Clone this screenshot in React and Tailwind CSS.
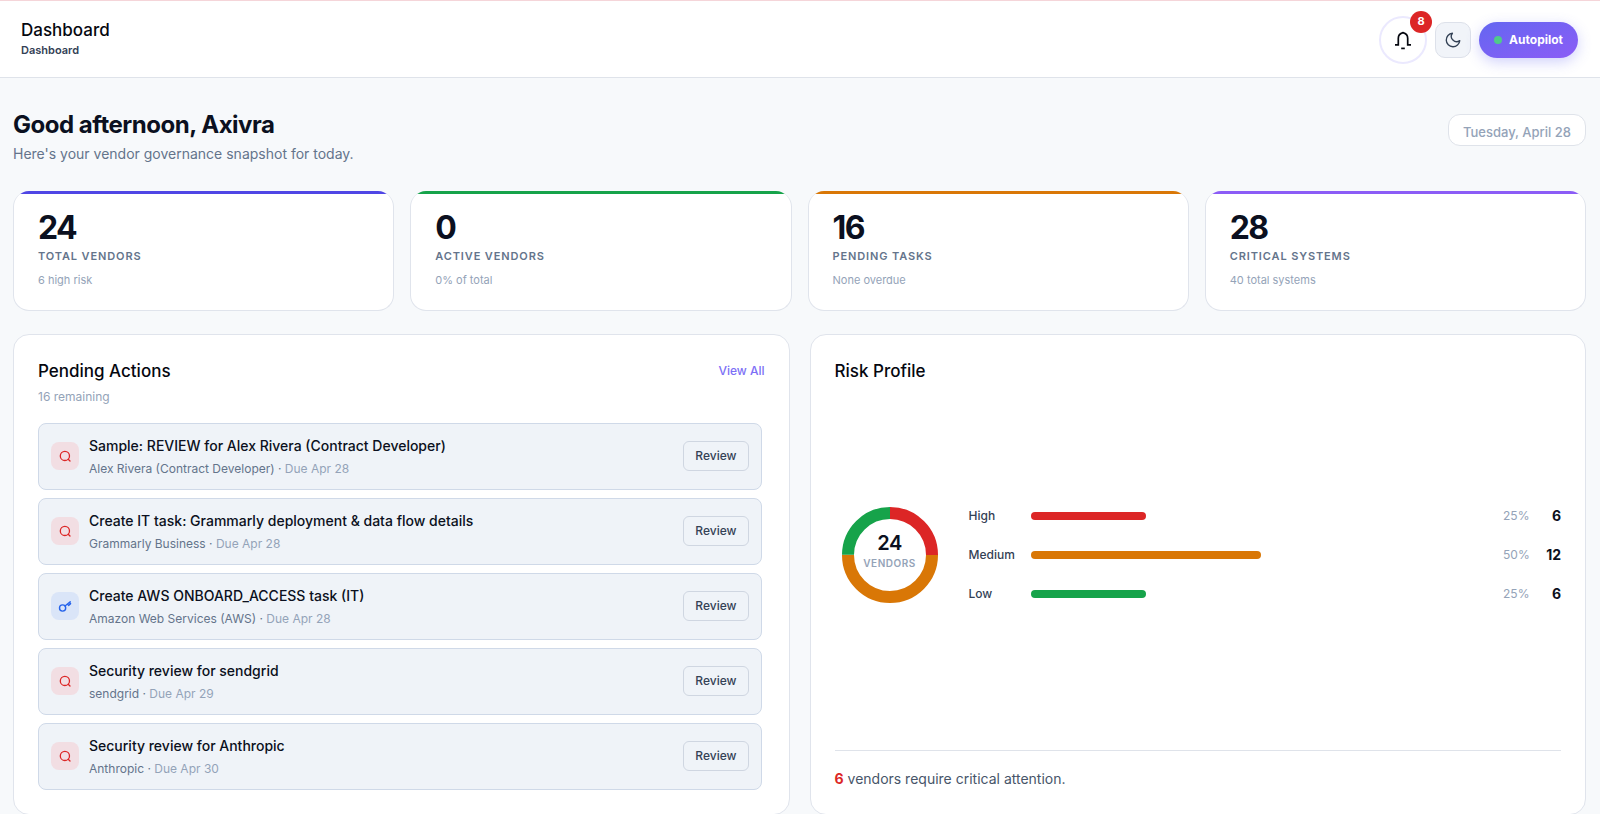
import React from 'react';

const stats = [
    { value: 24, label: 'Total Vendors', note: '6 high risk', bar: 'bg-[#4f46e5]' },
    { value: 0, label: 'Active Vendors', note: '0% of total', bar: 'bg-[#16a34a]' },
    { value: 16, label: 'Pending Tasks', note: 'None overdue', bar: 'bg-[#d97706]' },
    { value: 28, label: 'Critical Systems', note: '40 total systems', bar: 'bg-[#8b5cf6]' },
];

const actions = [
    { title: 'Sample: REVIEW for Alex Rivera (Contract Developer)', vendor: 'Alex Rivera (Contract Developer)', due: 'Due Apr 28', type: 'review' },
    { title: 'Create IT task: Grammarly deployment & data flow details', vendor: 'Grammarly Business', due: 'Due Apr 28', type: 'review' },
    { title: 'Create AWS ONBOARD_ACCESS task (IT)', vendor: 'Amazon Web Services (AWS)', due: 'Due Apr 28', type: 'access' },
    { title: 'Security review for sendgrid', vendor: 'sendgrid', due: 'Due Apr 29', type: 'review' },
    { title: 'Security review for Anthropic', vendor: 'Anthropic', due: 'Due Apr 30', type: 'review' },
];

const risks = [
    { label: 'High', percent: 25, count: 6, bar: 'bg-[#dc2626]', color: '#dc2626' },
    { label: 'Medium', percent: 50, count: 12, bar: 'bg-[#d97706]', color: '#d97706' },
    { label: 'Low', percent: 25, count: 6, bar: 'bg-[#16a34a]', color: '#16a34a' },
];

function BellIcon() {
    return (
        <svg className="w-5 h-5" viewBox="0 0 20 20" fill="none" stroke="currentColor" strokeWidth="1.7">
            <path d="M2 14.8h3.3V8.2c0-2.8 1.8-4.8 4.7-5.6 2.9.8 4.7 2.8 4.7 5.6v6.6H18" />
            <path d="M8.2 18.4h3.6" />
        </svg>
    );
}

function MoonIcon() {
    return (
        <svg className="w-[18px] h-[18px]" viewBox="0 0 24 24" fill="none" stroke="currentColor" strokeWidth="1.8" strokeLinecap="round" strokeLinejoin="round">
            <path d="M21 12.79A9 9 0 1 1 11.21 3 7 7 0 0 0 21 12.79z" />
        </svg>
    );
}

function ReviewIcon() {
    return (
        <svg className="w-3.5 h-3.5" viewBox="0 0 14 14" fill="none" stroke="currentColor" strokeWidth="1.3" strokeLinecap="round">
            <circle cx="6.9" cy="6.9" r="4.6" />
            <path d="M10.2 10.2l1.8 1.8" />
        </svg>
    );
}

function KeyIcon() {
    return (
        <svg className="w-3.5 h-3.5" viewBox="0 0 14 14" fill="none" stroke="currentColor" strokeWidth="1.4" strokeLinecap="round" strokeLinejoin="round">
            <circle cx="4.6" cy="9" r="3.1" />
            <path d="M7 7l5.2-4.2M9.4 5.1l1.2 1.3 2-1.7-1.1-1.4" />
        </svg>
    );
}

function Header() {
    return (
        <header className="flex items-center justify-between h-[78px] pl-[21px] pr-[22px] bg-white border-t border-t-[#f5d5d9] border-b border-b-[#dfe3ea]">
            <div className="flex flex-col pb-[3px]">
                <h1 className="text-[17px] leading-6 font-medium text-[#05070f]">Dashboard</h1>
                <span className="text-[11px] leading-4 font-semibold text-[#334155]">Dashboard</span>
            </div>
            <div className="flex items-center gap-2 pt-px">
                <button aria-label="Notifications" className="relative flex items-center justify-center w-12 h-12 rounded-full bg-white border-2 border-[#ebe9fe] text-[#05070f]">
                    <BellIcon />
                    <span className="absolute -top-[7px] -right-[7px] flex items-center justify-center w-[22px] h-[22px] rounded-full bg-[#dc2626] text-[11px] font-bold text-white">8</span>
                </button>
                <button aria-label="Dark mode" className="flex items-center justify-center w-9 h-9 rounded-[10px] bg-[#f1f4f9] border border-[#dde1ea] text-[#334155]">
                    <MoonIcon />
                </button>
                <button className="flex items-center gap-[7px] h-9 px-[15px] rounded-full bg-linear-to-br from-[#6366f1] to-[#8b5cf6] text-[12px] font-bold text-white shadow-[0_4px_14px_rgba(99,102,241,0.3)]">
                    <span className="w-2 h-2 rounded-full bg-[#4fca8a]" />
                    Autopilot
                </button>
            </div>
        </header>
    );
}

function StatCard({ value, label, note, bar }) {
    return (
        <div className="h-[120px] rounded-2xl bg-white border border-t-0 border-[#e0e4ec] overflow-hidden">
            <div className={`h-[3px] ${bar}`} />
            <div className="flex flex-col px-6 pt-4">
                <span className="text-[32px] leading-9 font-bold tracking-tighter text-[#0b1020]">{value}</span>
                <span className="mt-0.5 text-[11px] leading-4 font-semibold tracking-[0.08em] uppercase text-[#64748b]">{label}</span>
                <span className="mt-2 text-[11px] leading-4 text-[#94a3b8]">{note}</span>
            </div>
        </div>
    );
}

function ActionRow({ title, vendor, due, type }) {
    const isReview = type === 'review';
    return (
        <li className="flex items-center gap-2.5 h-[67px] px-3 pb-px rounded-lg bg-[#eff3f8] border border-[#cfd9e8]">
            <span className={`flex items-center justify-center w-7 h-7 rounded-lg ${isReview ? 'bg-[#f2dee3] text-[#dc2626]' : 'bg-[#dae5f8] text-[#2563eb]'}`}>
                {isReview ? <ReviewIcon /> : <KeyIcon />}
            </span>
            <div className="flex-1 min-w-0 pt-px">
                <p className="text-[14px] leading-5 font-medium text-[#0b1020]">{title}</p>
                <p className="mt-1 text-[12px] leading-[18px] text-[#64748b]">
                    {vendor} · <span className="text-[#94a3b8]">{due}</span>
                </p>
            </div>
            <button className="h-[30px] px-[11px] rounded-md border border-[#cfd6e1] text-[12px] font-medium text-[#334155]">Review</button>
        </li>
    );
}

function Donut() {
    const circumference = 2 * Math.PI * 42;
    let offset = 0;
    return (
        <div className="grid place-items-center w-[110px] h-[110px]">
            <svg className="col-start-1 row-start-1 w-[110px] h-[110px] -rotate-90" viewBox="0 0 110 110" fill="none">
                {risks.map((r) => {
                    const length = (r.percent / 100) * circumference;
                    const start = offset;
                    offset += length;
                    return (
                        <circle
                            key={r.label}
                            cx="55"
                            cy="55"
                            r="42"
                            stroke={r.color}
                            strokeWidth="12"
                            strokeDasharray={`${length} ${circumference - length}`}
                            strokeDashoffset={-start}
                        />
                    );
                })}
            </svg>
            <div className="col-start-1 row-start-1 flex flex-col items-center pb-2">
                <span className="text-[20px] leading-6 font-semibold tracking-tight text-[#0b1020]">24</span>
                <span className="text-[10px] leading-4 font-semibold tracking-wider text-[#94a3b8]">VENDORS</span>
            </div>
        </div>
    );
}

export default function App() {
    return (
        <div className="min-h-screen bg-[#f7f9fb] font-['Inter',sans-serif]">
            <Header />
            <main className="pl-[13px] pr-[14px]">
                <div className="flex items-start justify-between pt-[30px]">
                    <div className="pt-px">
                        <h2 className="text-[24px] leading-8 font-bold tracking-[-0.02em] text-[#0b1020]">Good afternoon, Axivra</h2>
                        <p className="mt-[3px] text-[14px] leading-5 text-[#64748b]">Here's your vendor governance snapshot for today.</p>
                    </div>
                    <span className="mt-1.5 h-8 px-3.5 pt-[7px] rounded-xl bg-white border border-[#dfe3ea] text-[13px] leading-5 font-medium text-[#94a3b8]">Tuesday, April 28</span>
                </div>

                <section className="grid grid-cols-4 gap-4 mt-[27px]">
                    {stats.map((s) => (
                        <StatCard key={s.label} {...s} />
                    ))}
                </section>

                <section className="grid grid-cols-2 gap-5 mt-[23px]">
                    <div className="p-6 rounded-2xl bg-white border border-[#e0e4ec]">
                        <div className="flex items-center justify-between">
                            <h3 className="text-[17px] leading-6 font-medium text-[#05070f]">Pending Actions</h3>
                            <a href="#actions" className="text-[12px] leading-4 font-medium text-[#7c6ff6]">View All</a>
                        </div>
                        <p className="mt-1 text-[12px] leading-5 text-[#94a3b8]">16 remaining</p>
                        <ul className="flex flex-col gap-2 mt-4 pr-[3px]">
                            {actions.map((a) => (
                                <ActionRow key={a.title} {...a} />
                            ))}
                        </ul>
                    </div>

                    <div className="flex flex-col px-6 pt-6 pb-[25px] rounded-2xl bg-white border border-[#e0e4ec]">
                        <h3 className="text-[17px] leading-6 font-medium text-[#05070f]">Risk Profile</h3>
                        <div className="flex flex-1 items-center gap-6 pb-6">
                            <Donut />
                            <div className="flex flex-1 flex-col gap-[19px]">
                                {risks.map((r) => (
                                    <div key={r.label} className="flex items-center gap-3 h-5">
                                        <span className="w-[50px] text-[12px] font-medium text-[#334155]">{r.label}</span>
                                        <div className="flex-1">
                                            <div className={`h-2 rounded-full ${r.bar}`} style={{ width: `${r.percent}%` }} />
                                        </div>
                                        <span className="w-[26px] text-right text-[12px] text-[#94a3b8]">{r.percent}%</span>
                                        <span className="w-5 text-right text-[14px] font-bold text-[#0b1020]">{r.count}</span>
                                    </div>
                                ))}
                            </div>
                        </div>
                        <p className="pt-[18px] border-t border-[#dfe3ea] text-[14px] leading-5 text-[#475569]">
                            <span className="font-bold text-[#dc2626]">6</span> vendors require critical attention.
                        </p>
                    </div>
                </section>
            </main>
        </div>
    );
}
